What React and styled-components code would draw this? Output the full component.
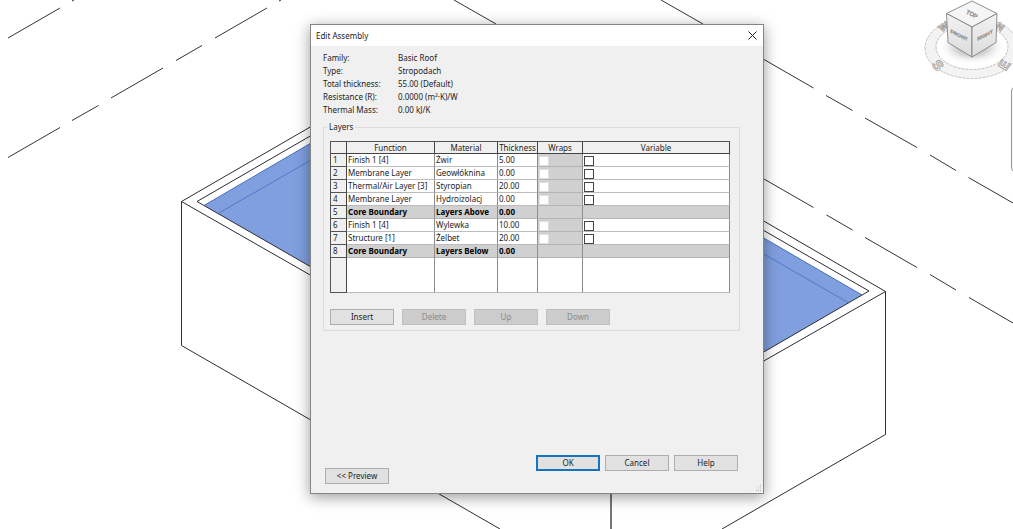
import React, { useState } from "react";
import styled, { createGlobalStyle, css } from "styled-components";

const GlobalStyle = createGlobalStyle`
  * { box-sizing: border-box; }
  body {
    margin: 0;
    background: #fff;
    color: #1c1c24;
    font: 8px/13px "Noto Sans", "Open Sans", sans-serif;
  }
  button, input { font: inherit; color: inherit; margin: 0; }
`;

const Workspace = styled.main`
  position: relative;
  min-height: 100vh;
  overflow: hidden;
`;

const Model = styled.svg`
  position: absolute;
  inset: 0;
  width: 100%;
  height: 100%;
`;

const NavigationBar = styled.aside`
  position: absolute;
  top: 87px;
  right: -28px;
  width: 30px;
  height: 85px;
  border: 1px solid #999;
  border-radius: 4px;
  background: #f4f4f4;
`;

const Dialog = styled.section`
  position: absolute;
  top: 24px;
  left: 310px;
  width: 454px;
  border: 1px solid #858585;
  background: #f0f0f0;
  box-shadow: 0 3px 14px rgba(0, 0, 0, 0.4);
`;

const TitleBar = styled.header`
  display: flex;
  align-items: center;
  justify-content: space-between;
  height: 21px;
  padding: 0 6px 0 5px;
  background: #fff;
`;

const Title = styled.h1`
  margin: 0;
  font-size: 8px;
  font-weight: 400;
`;

const CloseButton = styled.button`
  display: flex;
  padding: 0;
  border: 0;
  background: none;
`;

const Body = styled.div`
  padding: 5px 23px 9px 12px;
`;

const Summary = styled.dl`
  display: grid;
  grid-template-columns: 75px 1fr;
  margin: 0 0 5px;

  dt, dd { margin: 0; }
`;

const LayerGroup = styled.fieldset`
  min-width: 0;
  margin: 0;
  padding: 8px 9px 5px 6px;
  border: 1px solid #dcdcdc;
`;

const Legend = styled.legend`
  margin-left: -3px;
  padding: 0 2px;
  line-height: 12px;
`;

const LayerTable = styled.table`
  width: 100%;
  table-layout: fixed;
  border-collapse: separate;
  border-spacing: 0;
  border-top: 1px solid #555;
  border-left: 1px solid #555;
  background: #fff;
`;

const HeadCell = styled.th`
  height: 12px;
  padding: 0;
  border-right: 1px solid #444;
  border-bottom: 1px solid #444;
  background: #f0f0f0;
  font-weight: 400;
  line-height: 11px;
  white-space: nowrap;
`;

const RowHead = styled.th`
  height: 13px;
  padding: 0 0 0 2px;
  border-right: 1px solid #444;
  border-bottom: 1px solid #555;
  background: #f0f0f0;
  font-weight: 400;
  line-height: 12px;
  text-align: left;
`;

const Cell = styled.td`
  height: 13px;
  padding: 0 0 0 1px;
  overflow: hidden;
  border-right: 1px solid #8c8c8c;
  border-bottom: 1px solid #bcbcbc;
  line-height: 12px;
  white-space: nowrap;
  ${(p) => p.$shaded && css`
    background: #d0d0d0;
    border-bottom-color: #b4b4b4;
  `}
  ${(p) => p.$core && css`
    color: #000;
    font-weight: 700;
  `}
`;

const FillRow = styled.tr`
  ${RowHead}, ${Cell} { height: 35px; }
`;

const Tick = styled.input`
  appearance: none;
  display: block;
  width: 10px;
  height: 10px;
  margin: 1px 0 0;
  border: 1px solid #444;
  background: #fff;

  &:checked { background: #0078d7; }
  &:disabled { border-color: #dedede; }
`;

const ButtonRow = styled.div`
  display: flex;
  gap: ${(p) => p.$gap}px;
`;

const LayerActions = styled(ButtonRow)`
  margin-top: 16px;
`;

const Button = styled.button`
  width: 64px;
  height: 16px;
  padding: 0;
  border: 1px solid #adadad;
  background: #e1e1e1;
  line-height: 14px;
  text-align: center;

  &:disabled {
    border-color: #bfbfbf;
    background: #ccc;
    color: #8b8b8b;
  }
  ${(p) => p.$primary && css`
    border: 2px solid #1673bd;
    line-height: 12px;
  `}
`;

const Footer = styled.footer`
  display: flex;
  justify-content: space-between;
  height: 29px;
  margin: 124px 2px 0 2px;

  > button { align-self: flex-end; }
`;

const Grip = styled.svg`
  position: absolute;
  right: 1px;
  bottom: 1px;
`;

const summary = [
  ["Family:", "Basic Roof"],
  ["Type:", "Stropodach"],
  ["Total thickness:", "55.00 (Default)"],
  ["Resistance (R):", "0.0000 (m²·K)/W"],
  ["Thermal Mass:", "0.00 kJ/K"],
];

const layers = [
  { fn: "Finish 1 [4]", material: "Żwir", thickness: "5.00" },
  { fn: "Membrane Layer", material: "Geowłóknina", thickness: "0.00" },
  { fn: "Thermal/Air Layer [3]", material: "Styropian", thickness: "20.00" },
  { fn: "Membrane Layer", material: "Hydroizolacj", thickness: "0.00" },
  { fn: "Core Boundary", material: "Layers Above", thickness: "0.00", core: true },
  { fn: "Finish 1 [4]", material: "Wylewka", thickness: "10.00" },
  { fn: "Structure [1]", material: "Żelbet", thickness: "20.00" },
  { fn: "Core Boundary", material: "Layers Below", thickness: "0.00", core: true },
];

function RoofModel() {
  return (
    <Model viewBox="0 0 1013 529" preserveAspectRatio="xMinYMin slice" aria-hidden="true">
      <g fill="none" stroke="#333" strokeWidth="1">
        <path d="M8 38 60 8M72 1 74 0M8 157.500 60 127.500M72 120.500 98.500 105.500M111 98 163 68M176 60.500 202 45.500M215 38 267 8M279 1 281 0" />
        <path d="M454 0 496 24M661 0 703 24M764 59.500 813.500 88M826 95.500 852.500 110.500M865 118 917 147.500M930 155 956 170.500M968.500 177.500 1013 203" />
        <path d="M764 179 813.500 207.500M826.500 215 852.500 230M865 237.500 917 267.500M930 274.500 956 290M969 297.500 1013 323" />
      </g>
      <path d="M204 205.500 312 142.500V267.500ZM762 237 862 295 762 353Z" fill="#809fdf" />
      <g fill="none" stroke="#476dc4" strokeWidth="1">
        <path d="M204 205.500 312 142.500M762 237 862 295" />
        <path d="M219 213 312 159.500M762 253 848 302.500" strokeOpacity="0.800" />
      </g>
      <g fill="none" stroke="#2c2c34" strokeWidth="1">
        <path d="M312 126 181.500 201.500 312 276M312 135 197 201.500 312 267.500" />
        <path d="M762 220 885.500 291.500 762 362M762 229.500 869 291 762 353" />
        <path d="M181.500 201.500V345.500L500 529M885.500 291.500V434.500L722 529" />
      </g>
      <path d="M611 490V529" stroke="#555" strokeWidth="1.600" />
    </Model>
  );
}

const CubeSvg = styled.svg`
  position: absolute;
  top: 0;
  right: -7px;
`;

function ViewCube() {
  return (
    <CubeSvg width="100" height="84" viewBox="0 0 100 84" aria-label="View cube">
      <defs>
        <radialGradient id="cubeShadow">
          <stop offset="0" stopColor="#777" stopOpacity="0.800" />
          <stop offset="0.500" stopColor="#999" stopOpacity="0.400" />
          <stop offset="1" stopColor="#fff" stopOpacity="0" />
        </radialGradient>
        <linearGradient id="cubeFace" x1="0" y1="0" x2="0" y2="1">
          <stop offset="0" stopColor="#f2f2f2" />
          <stop offset="1" stopColor="#dcdcdc" />
        </linearGradient>
      </defs>
      <path
        d="M5 48a47 30.500 0 1 0 94 0a47 30.500 0 1 0 -94 0ZM16 47a36 22.500 0 1 0 72 0a36 22.500 0 1 0 -72 0Z"
        fill="#f3f3f3" fillRule="evenodd" stroke="#b4b4b4" strokeWidth="0.800" strokeDasharray="3 1"
      />
      <ellipse cx="52" cy="47" rx="34" ry="18" fill="url(#cubeShadow)" />
      <g fontFamily="Liberation Sans, sans-serif" fontWeight="700" fill="#f4f4f4" stroke="#999" strokeWidth="0.800" textAnchor="middle">
        <text fontSize="14" transform="translate(18 65) rotate(50)" dy="5">S</text>
        <text fontSize="14" transform="translate(84 65) rotate(-58)" dy="5">E</text>
        <text fontSize="10" transform="translate(24 27) rotate(-35)" dy="3">W</text>
        <text fontSize="10" transform="translate(80 27) rotate(35)" dy="3">N</text>
      </g>
      <g stroke="#777" strokeWidth="0.800" strokeLinejoin="round">
        <path d="M52 1 77 13.500 52 27 26.500 13.500Z" fill="#f5f5f5" />
        <path d="M26.500 13.500 52 27V57L28 42.500Z" fill="url(#cubeFace)" />
        <path d="M77 13.500 52 27V57L76 42.500Z" fill="url(#cubeFace)" />
      </g>
      <g fontFamily="Liberation Sans, sans-serif" fontWeight="700" fontSize="5" fill="#8a8a8a" stroke="#8a8a8a" strokeWidth="0.200" textAnchor="middle">
        <text fontSize="6" transform="translate(51 16) rotate(28)">TOP</text>
        <text transform="translate(39 37) skewY(27)">FRONT</text>
        <text transform="translate(65 37) skewY(-27)">RIGHT</text>
      </g>
    </CubeSvg>
  );
}

function LayerRow({ layer, number }) {
  const [variable, setVariable] = useState(false);
  const { fn, material, thickness, core } = layer;
  return (
    <tr>
      <RowHead scope="row">{number}</RowHead>
      <Cell $core={core} $shaded={core}>{fn}</Cell>
      <Cell $core={core} $shaded={core}>{material}</Cell>
      <Cell $core={core} $shaded={core}>{thickness}</Cell>
      <Cell $shaded>
        {!core && <Tick type="checkbox" disabled aria-label={`Wraps, layer ${number}`} />}
      </Cell>
      <Cell $shaded={core}>
        {!core && (
          <Tick
            type="checkbox"
            checked={variable}
            onChange={(e) => setVariable(e.target.checked)}
            aria-label={`Variable, layer ${number}`}
          />
        )}
      </Cell>
    </tr>
  );
}

export default function App() {
  return (
    <Workspace>
      <GlobalStyle />
      <RoofModel />
      <ViewCube />
      <NavigationBar aria-label="Navigation bar" />
      <Dialog role="dialog" aria-labelledby="dialog-title">
        <TitleBar>
          <Title id="dialog-title">Edit Assembly</Title>
          <CloseButton type="button" aria-label="Close">
            <svg width="9" height="9" viewBox="0 0 9 9" fill="none" stroke="#222" strokeWidth="1">
              <path d="M.5.5 8.500 8.500M8.500.5.5 8.500" />
            </svg>
          </CloseButton>
        </TitleBar>
        <Body>
          <Summary>
            {summary.map(([label, value]) => (
              <React.Fragment key={label}>
                <dt>{label}</dt>
                <dd>{value}</dd>
              </React.Fragment>
            ))}
          </Summary>
          <LayerGroup>
            <Legend>Layers</Legend>
            <LayerTable>
              <colgroup>
                <col width="16" />
                <col width="88" />
                <col width="63" />
                <col width="40" />
                <col width="45" />
                <col />
              </colgroup>
              <thead>
                <tr>
                  <HeadCell aria-label="Number" />
                  <HeadCell scope="col">Function</HeadCell>
                  <HeadCell scope="col">Material</HeadCell>
                  <HeadCell scope="col">Thickness</HeadCell>
                  <HeadCell scope="col">Wraps</HeadCell>
                  <HeadCell scope="col">Variable</HeadCell>
                </tr>
              </thead>
              <tbody>
                {layers.map((layer, i) => (
                  <LayerRow key={i} layer={layer} number={i + 1} />
                ))}
                <FillRow>
                  <RowHead as="td" />
                  <Cell /><Cell /><Cell /><Cell /><Cell />
                </FillRow>
              </tbody>
            </LayerTable>
            <LayerActions $gap={8}>
              <Button type="button">Insert</Button>
              <Button type="button" disabled>Delete</Button>
              <Button type="button" disabled>Up</Button>
              <Button type="button" disabled>Down</Button>
            </LayerActions>
          </LayerGroup>
          <Footer>
            <Button type="button">&lt;&lt; Preview</Button>
            <ButtonRow $gap={5}>
              <Button type="button" $primary>OK</Button>
              <Button type="button">Cancel</Button>
              <Button type="button">Help</Button>
            </ButtonRow>
          </Footer>
        </Body>
        <Grip width="7" height="7" viewBox="0 0 7 7" fill="#b0b0b0" aria-hidden="true">
          <path d="M5 0h1v1h-1zM3 2.500h1v1h-1zM5 2.500h1v1h-1zM1 5h1v1h-1zM3 5h1v1h-1zM5 5h1v1h-1z" />
        </Grip>
      </Dialog>
    </Workspace>
  );
}
